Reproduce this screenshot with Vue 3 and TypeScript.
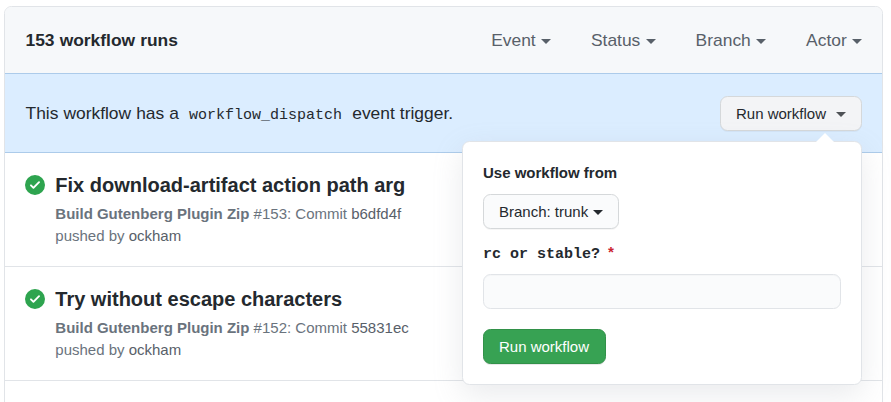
<script setup lang="ts">
import { ref } from 'vue'

interface Run {
  title: string
  workflow: string
  number: number
  commit: string
  actor: string
}

const filters: string[] = ['Event', 'Status', 'Branch', 'Actor']

const runs: Run[] = [
  { title: 'Fix download-artifact action path arg', workflow: 'Build Gutenberg Plugin Zip', number: 153, commit: 'b6dfd4f', actor: 'ockham' },
  { title: 'Try without escape characters', workflow: 'Build Gutenberg Plugin Zip', number: 152, commit: '55831ec', actor: 'ockham' },
]

const channel = ref('')
</script>

<template>
  <main class="page">
    <section class="box">
      <header class="header">
        <strong class="count">153 workflow runs</strong>
        <nav class="filters">
          <a v-for="f in filters" :key="f" class="filter">{{ f }}<span class="caret"></span></a>
        </nav>
      </header>

      <div class="dispatch">
        <p class="message">This workflow has a <code>workflow_dispatch</code> event trigger.</p>
        <div class="trigger">
          <button type="button" class="btn toggle">Run workflow<span class="caret"></span></button>
          <form class="popover" @submit.prevent>
            <svg class="pointer" viewBox="0 0 18 9"><path d="M0 9 9 0l9 9z" /></svg>
            <p class="label">Use workflow from</p>
            <button type="button" class="btn branch">Branch: trunk<span class="caret"></span></button>
            <label class="field-label" for="channel"><span>rc or stable?</span><span class="required">*</span></label>
            <input id="channel" v-model="channel" class="input" type="text" />
            <button type="submit" class="btn primary">Run workflow</button>
          </form>
        </div>
      </div>

      <article v-for="run in runs" :key="run.number" class="run">
        <svg class="status" viewBox="0 0 16 16">
          <path fill-rule="evenodd" d="M8 16A8 8 0 108 0a8 8 0 000 16zm3.78-9.72a.75.75 0 00-1.06-1.06L6.75 9.19 5.28 7.72a.75.75 0 00-1.06 1.06l2 2a.75.75 0 001.06 0l4.5-4.5z" />
        </svg>
        <div class="details">
          <h2 class="title">{{ run.title }}</h2>
          <p class="meta"><b>{{ run.workflow }}</b> #{{ run.number }}: Commit <a>{{ run.commit }}</a></p>
          <p class="meta">pushed by <a>{{ run.actor }}</a></p>
        </div>
      </article>
    </section>
  </main>
</template>

<style>
body {
  background: #fff;
  overflow: hidden;
}
</style>

<style scoped>
* {
  box-sizing: border-box;
}

.page {
  height: 402px;
  padding: 6px 8px 0 4px;
  overflow: hidden;
  color: #24292e;
  font-family: "Liberation Sans", Arial, sans-serif;
  font-size: 17.42px;
}

p,
h2 {
  margin: 0;
}

.box {
  height: 440px;
  border: 1px solid #e1e4e8;
  border-radius: 7.5px;
}

.header {
  display: flex;
  align-items: center;
  justify-content: space-between;
  height: 66px;
  padding: 0 20px 0 20.5px;
  background: #f6f8fa;
  border-radius: 6.5px 6.5px 0 0;
}

.count {
  font-weight: 700;
  word-spacing: 0.25px;
}

.filters {
  display: flex;
  gap: 40px;
  color: #586069;
}

.caret {
  display: inline-block;
  width: 0;
  height: 0;
  margin-left: 5px;
  vertical-align: middle;
  border: 5px solid transparent;
  border-top-color: currentColor;
  border-bottom-width: 0;
}

.filter .caret {
  margin-top: 1px;
  margin-left: 5.3px;
}

.dispatch {
  display: flex;
  align-items: center;
  justify-content: space-between;
  height: 80px;
  padding: 0 20px 0 20.5px;
  background: #dbedff;
  border-top: 1px solid #accbea;
  border-bottom: 1px solid #accbea;
}

.message {
  word-spacing: 0.2px;
}

code {
  padding: 0 5.2px 0 5px;
  font-family: "Liberation Mono", monospace;
  font-size: 15px;
}

.trigger {
  position: relative;
}

.btn {
  display: block;
  height: 35px;
  padding: 0 15px;
  font: 15px/33px "Liberation Sans", Arial, sans-serif;
  color: #24292e;
  text-align: left;
  white-space: nowrap;
  background: #fafbfc;
  border: 1px solid #d5d8da;
  border-radius: 7.5px;
  box-shadow: 0 1px 0 rgba(27, 31, 35, 0.04);
}

.toggle {
  background: #f3f4f6;
}

.toggle .caret {
  margin-left: 10px;
  opacity: 0.8;
}

.popover {
  position: absolute;
  top: 45px;
  right: 0;
  z-index: 2;
  width: 400px;
  height: 244px;
  padding: 20px;
  background: #fff;
  border: 1px solid #e1e4e8;
  border-radius: 7.5px;
  box-shadow: 0 10px 30px rgba(149, 157, 165, 0.2);
}

.pointer {
  position: absolute;
  top: -9px;
  right: 27px;
  width: 18px;
  height: 9px;
  fill: #fff;
}

.label {
  margin-bottom: 10px;
  font-size: 15px;
  font-weight: 700;
  line-height: 22px;
}

.field-label {
  display: flex;
  gap: 6.5px;
  margin: 15px 0 9px;
  font: 700 15px/21px "Liberation Mono", monospace;
}

.required {
  color: #cb2431;
}

.input {
  display: block;
  width: 100%;
  height: 35px;
  padding: 0 15px;
  font: inherit;
  background: #fafbfc;
  border: 1px solid #e1e4e8;
  border-radius: 7.5px;
  box-shadow: inset 0 1px 0 rgba(225, 228, 232, 0.2);
  outline: none;
}

.primary {
  width: 123px;
  margin-top: 20px;
  color: #fff;
  background: #37a253;
  border-color: #329149;
  box-shadow: 0 1px 0 rgba(27, 31, 35, 0.1);
}

.run {
  display: flex;
  gap: 10.3px;
  height: 114px;
  padding: 17px 20px 0;
  border-bottom: 1px solid #e1e4e8;
}

.status {
  flex: none;
  width: 20px;
  height: 20px;
  margin-top: 5px;
  fill: #2ea44f;
}

.title {
  margin-bottom: 3px;
  font-size: 20px;
  font-weight: 700;
  line-height: 30px;
}

.meta {
  color: #6a737d;
  font-size: 15px;
  line-height: 22px;
}

.meta a {
  color: #586069;
}
</style>
